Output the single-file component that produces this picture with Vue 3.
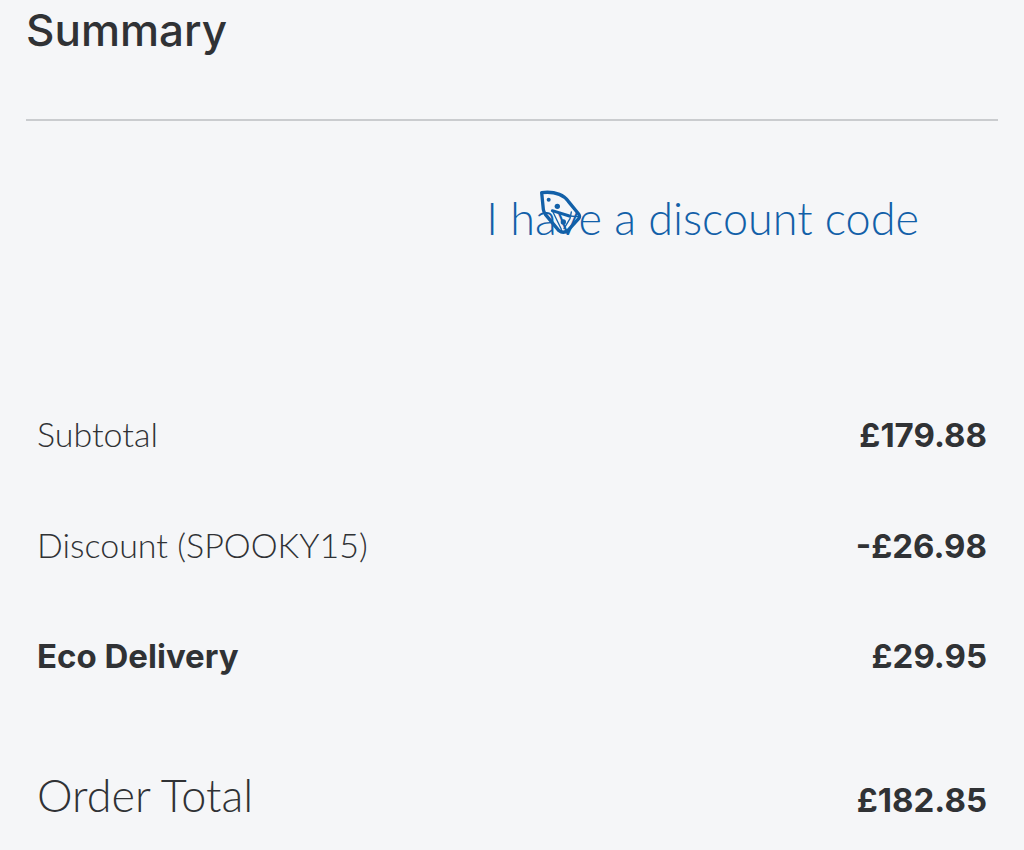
<script setup>
const rows = [
  { label: 'Subtotal', value: '£179.88' },
  { label: 'Discount (SPOOKY15)', value: '-£26.98' },
  { label: 'Eco Delivery', value: '£29.95', kind: 'strong' },
  { label: 'Order Total', value: '£182.85', kind: 'total' },
]
</script>

<template>
  <main class="summary">
    <h1 class="title">Summary</h1>
    <div class="discount">
      <button type="button" class="code">
        I have a discount code
        <svg class="tag" viewBox="0 0 132 138" aria-hidden="true">
          <g fill="none" stroke="currentColor" stroke-linejoin="round" stroke-linecap="round">
            <path stroke-width="10" d="M5 8 Q34 4 58 13 Q74 19 85 34 L116 72 Q121 79 116 86 L84 121 Q70 132 56 121 L16 73 Q11 66 10 58 Z" />
            <path stroke-width="9" d="M37 62 L88 78" />
            <path stroke-width="4" d="M37 62 L64 118 M94 66 L90 86 L72 116 M88 78 L114 80" />
          </g>
          <g fill="currentColor">
            <circle cx="26" cy="29" r="6" />
            <circle cx="52" cy="49" r="8" />
            <circle cx="70" cy="96" r="8" />
          </g>
        </svg>
      </button>
    </div>
    <table class="totals">
      <tbody>
        <tr v-for="row in rows" :key="row.label" :class="row.kind">
          <th scope="row">{{ row.label }}</th>
          <td>{{ row.value }}</td>
        </tr>
      </tbody>
    </table>
  </main>
</template>

<style>
body {
  background: #f5f6f8;
}
</style>

<style scoped>
.summary {
  padding: 0 26px;
  color: #303235;
  font-family: Lato, "Open Sans", sans-serif;
}
.title {
  margin: 0;
  padding-bottom: 59px;
  border-bottom: 2px solid #cacccf;
  font-family: Inter, sans-serif;
  font-size: 44px;
  font-weight: 500;
  line-height: 60px;
}
.discount {
  display: flex;
  justify-content: flex-end;
  padding: 67px 79px 131px 0;
}
.code {
  position: relative;
  padding: 0;
  border: 0;
  background: none;
  color: #1260a8;
  font: inherit;
  font-size: 45px;
  font-weight: 300;
  line-height: 60px;
  cursor: pointer;
}
.tag {
  position: absolute;
  top: 2px;
  left: 54px;
  width: 44px;
  height: 46px;
}
.totals {
  width: 100%;
  border-collapse: collapse;
  font-size: 34px;
}
.totals th,
.totals td {
  padding: 30px 11px;
  line-height: 50px;
  vertical-align: baseline;
}
.totals th {
  text-align: left;
  font-weight: 300;
}
.totals td {
  text-align: right;
}
.totals td,
.totals .strong th {
  font-family: Inter, sans-serif;
  font-size: 33px;
  font-weight: 700;
}
.totals .total th,
.totals .total td {
  padding-top: 59px;
}
.totals .total th {
  font-size: 45px;
}
</style>
